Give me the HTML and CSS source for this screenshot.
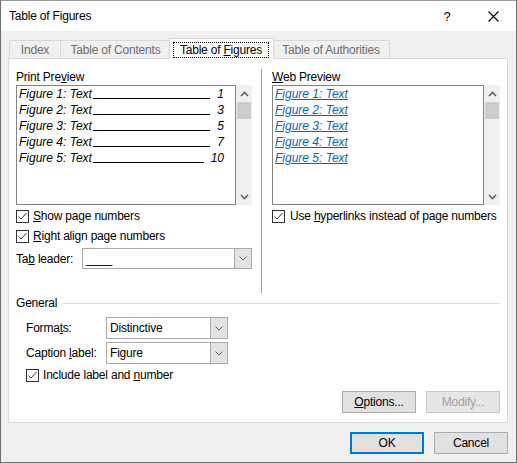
FILE: index.html
```html
<!DOCTYPE html>
<html>
<head>
<meta charset="utf-8">
<link rel="stylesheet" href="styles.css">
</head>
<body>
<div class="window">
  <div class="titlebar">
    <span class="title">Table of Figures</span>
    <span class="tbtn help">?</span>
    <span class="tbtn close"><svg width="11" height="11" viewBox="0 0 11 11"><path d="M0.5 0.5 L10.5 10.5 M10.5 0.5 L0.5 10.5" stroke="#000" stroke-width="1.1" fill="none"/></svg></span>
  </div>
  <div class="content">
    <div class="tabs">
      <div class="tab t-index">Index</div>
      <div class="tab t-toc">Table of Contents</div>
      <div class="tab t-tof active"><span class="focus">Table of <u>F</u>igures</span></div>
      <div class="tab t-toa">Table of Authorities</div>
    </div>
    <div class="panel">
      <div class="top-row">
        <div class="col col-left">
          <div class="label">Print Pre<u>v</u>iew</div>
          <div class="listwrap">
            <div class="listbox print">
              <div class="entry"><span class="cap">Figure 1: Text</span><span class="leader"></span><span class="num">1</span></div>
              <div class="entry"><span class="cap">Figure 2: Text</span><span class="leader"></span><span class="num">3</span></div>
              <div class="entry"><span class="cap">Figure 3: Text</span><span class="leader"></span><span class="num">5</span></div>
              <div class="entry"><span class="cap">Figure 4: Text</span><span class="leader"></span><span class="num">7</span></div>
              <div class="entry"><span class="cap">Figure 5: Text</span><span class="leader"></span><span class="num">10</span></div>
            </div>
            <div class="scrollbar">
              <div class="sarrow"><svg width="9" height="6" viewBox="0 0 9 6"><path d="M1 5 L4.5 1.5 L8 5" stroke="#606060" stroke-width="1.6" fill="none"/></svg></div>
              <div class="thumb"></div>
              <div class="strack"></div>
              <div class="sarrow"><svg width="9" height="6" viewBox="0 0 9 6"><path d="M1 1 L4.5 4.5 L8 1" stroke="#606060" stroke-width="1.6" fill="none"/></svg></div>
            </div>
          </div>
          <div class="check c1">
            <svg class="box" width="13" height="13" viewBox="0 0 13 13"><rect x="0.5" y="0.5" width="12" height="12" fill="#fff" stroke="#333"/><path d="M2.5 6.5 L5 9 L10.5 3" stroke="#333" stroke-width="1" fill="none"/></svg>
            <span><u>S</u>how page numbers</span>
          </div>
          <div class="check c2">
            <svg class="box" width="13" height="13" viewBox="0 0 13 13"><rect x="0.5" y="0.5" width="12" height="12" fill="#fff" stroke="#333"/><path d="M2.5 6.5 L5 9 L10.5 3" stroke="#333" stroke-width="1" fill="none"/></svg>
            <span><u>R</u>ight align page numbers</span>
          </div>
          <div class="field">
            <span class="flabel tl">Ta<u>b</u> leader:</span>
            <div class="combo wide">
              <span class="ctext">____</span>
              <span class="cbtn"><svg width="8" height="5" viewBox="0 0 8 5"><path d="M0.5 0.5 L4 4 L7.5 0.5" stroke="#606060" fill="none"/></svg></span>
            </div>
          </div>
        </div>
        <div class="divider"></div>
        <div class="col col-right">
          <div class="label"><u>W</u>eb Preview</div>
          <div class="listwrap">
            <div class="listbox web">
              <div class="entry"><span class="link">Figure 1: Text</span></div>
              <div class="entry"><span class="link">Figure 2: Text</span></div>
              <div class="entry"><span class="link">Figure 3: Text</span></div>
              <div class="entry"><span class="link">Figure 4: Text</span></div>
              <div class="entry"><span class="link">Figure 5: Text</span></div>
            </div>
            <div class="scrollbar">
              <div class="sarrow"><svg width="9" height="6" viewBox="0 0 9 6"><path d="M1 5 L4.5 1.5 L8 5" stroke="#606060" stroke-width="1.6" fill="none"/></svg></div>
              <div class="thumb"></div>
              <div class="strack"></div>
              <div class="sarrow"><svg width="9" height="6" viewBox="0 0 9 6"><path d="M1 1 L4.5 4.5 L8 1" stroke="#606060" stroke-width="1.6" fill="none"/></svg></div>
            </div>
          </div>
          <div class="check c1 cr">
            <svg class="box" width="13" height="13" viewBox="0 0 13 13"><rect x="0.5" y="0.5" width="12" height="12" fill="#fff" stroke="#333"/><path d="M2.5 6.5 L5 9 L10.5 3" stroke="#333" stroke-width="1" fill="none"/></svg>
            <span>Use <u>h</u>yperlinks instead of page numbers</span>
          </div>
        </div>
      </div>
      <div class="general-head"><span>General</span><span class="rule"></span></div>
      <div class="grow g1">
        <span class="flabel gl">Forma<u>t</u>s:</span>
        <div class="combo narrow">
          <span class="ctext">Distinctive</span>
          <span class="cbtn"><svg width="8" height="5" viewBox="0 0 8 5"><path d="M0.5 0.5 L4 4 L7.5 0.5" stroke="#606060" fill="none"/></svg></span>
        </div>
      </div>
      <div class="grow g2">
        <span class="flabel gl">Caption <u>l</u>abel:</span>
        <div class="combo narrow">
          <span class="ctext">Figure</span>
          <span class="cbtn"><svg width="8" height="5" viewBox="0 0 8 5"><path d="M0.5 0.5 L4 4 L7.5 0.5" stroke="#606060" fill="none"/></svg></span>
        </div>
      </div>
      <div class="check gc">
        <svg class="box" width="13" height="13" viewBox="0 0 13 13"><rect x="0.5" y="0.5" width="12" height="12" fill="#fff" stroke="#333"/><path d="M2.5 6.5 L5 9 L10.5 3" stroke="#333" stroke-width="1" fill="none"/></svg>
        <span>Include label and <u>n</u>umber</span>
      </div>
      <div class="btnrow">
        <button class="btn"><u>O</u>ptions...</button>
        <button class="btn disabled">Modify...</button>
      </div>
    </div>
    <div class="footer">
      <button class="btn default">OK</button>
      <button class="btn">Cancel</button>
    </div>
  </div>
</div>
</body>
</html>
```
FILE: styles.css
```css
html, body {
  margin: 0;
  padding: 0;
}
body {
  font-family: "Liberation Sans", Arial, sans-serif;
  font-size: 12px;
  letter-spacing: -0.2px;
  color: #000;
  background: #fff;
}
u {
  text-decoration: underline;
  text-underline-offset: 1px;
}
.window {
  width: 517px;
  height: 463px;
  box-sizing: border-box;
  border: 1px solid #707070;
  border-top-color: #9a9a9a;
  display: flex;
  flex-direction: column;
  background: #f0f0f0;
}
.titlebar {
  height: 30px;
  flex: none;
  background: #fff;
  display: flex;
  align-items: center;
  padding-left: 8px;
}
.title {
  flex: 1;
  font-size: 12px;
}
.tbtn {
  width: 46px;
  height: 30px;
  display: flex;
  align-items: center;
  justify-content: center;
}
.help {
  font-size: 13px;
}
.content {
  flex: 1;
  padding: 7px 8px 8px 7px;
  display: flex;
  flex-direction: column;
}
.tabs {
  display: flex;
  height: 20px;
  padding-left: 1px;
  flex: none;
}
.tab {
  box-sizing: border-box;
  flex: none;
  height: 18px;
  margin-top: 2px;
  border: 1px solid #d9d9d9;
  border-bottom: none;
  background: #f0f0f0;
  color: #6d6d6d;
  text-align: center;
  line-height: 17px;
  padding-top: 1px;
  white-space: nowrap;
}
.t-index { width: 52px; }
.t-toc { width: 111px; margin-left: -1px; }
.t-tof { width: 105px; margin-left: -2px; }
.t-toa { width: 118px; margin-left: -2px; }
.tab.active {
  height: 21px;
  margin-top: 0;
  background: #fff;
  color: #000;
  position: relative;
  z-index: 1;
  padding: 3px 0 0 3px;
  text-align: left;
}
.focus {
  display: block;
  box-sizing: border-box;
  width: 96px;
  height: 16px;
  border: 1px dotted #000;
  text-align: center;
  line-height: 14px;
  white-space: nowrap;
}
.panel {
  box-sizing: border-box;
  height: 365px;
  flex: none;
  border: 1px solid #d9d9d9;
  background: #fff;
  padding: 10px 7px 0 7px;
}
.top-row {
  display: flex;
  height: 224px;
}
.col { flex: none; min-width: 0; }
.col-left { width: 236px; }
.col-right { width: 228px; }
.divider {
  flex: none;
  width: 1px;
  background: #a0a0a0;
  margin: 0 10px 0 9px;
}
.label {
  height: 16px;
  line-height: 16px;
  white-space: nowrap;
}
.listwrap {
  display: flex;
  height: 120px;
}
.listbox {
  box-sizing: border-box;
  flex: 1 1 0;
  min-width: 0;
  overflow: hidden;
  border: 1px solid #828282;
  padding: 0 11px 0 2px;
  font-style: italic;
  letter-spacing: 0;
}
.entry {
  display: flex;
  height: 16px;
  line-height: 16px;
  white-space: nowrap;
}
.cap { flex: none; }
.leader {
  flex: 1 1 0;
  min-width: 0;
  align-self: flex-start;
  box-sizing: border-box;
  height: 13px;
  border-bottom: 1px solid #000;
  margin-left: 1px;
}
.num {
  flex: none;
  margin-left: 7px;
}
.link {
  color: #0563c1;
  text-decoration: underline;
}
.scrollbar {
  flex: none;
  width: 16px;
  background: #f0f0f0;
  display: flex;
  flex-direction: column;
}
.sarrow {
  height: 17px;
  display: flex;
  align-items: center;
  justify-content: center;
}
.thumb {
  height: 17px;
  margin: 0 1px 0 1px;
  background: #cdcdcd;
}
.strack { flex: 1; }
.check {
  display: flex;
  align-items: center;
  height: 16px;
  gap: 4px;
  margin-top: 3px;
  white-space: nowrap;
}
.check.c2 { margin-top: 4px; }
.check.cr { gap: 5px; }
.box { flex: none; display: block; }
.field {
  display: flex;
  align-items: center;
  margin-top: 4px;
}
.flabel { flex: none; white-space: nowrap; }
.tl { width: 66px; }
.gl { width: 80px; }
.combo {
  box-sizing: border-box;
  flex: none;
  border: 1px solid #a9a9a9;
  display: flex;
  background: #fff;
}
.combo.wide { width: 170px; height: 21px; }
.combo.narrow { width: 122px; height: 22px; }
.ctext {
  flex: 1;
  padding-left: 3px;
  display: flex;
  align-items: center;
}
.cbtn {
  width: 16px;
  background: #e3e3e3;
  border-left: 1px solid #a9a9a9;
  display: flex;
  align-items: center;
  justify-content: center;
}
.general-head {
  display: flex;
  align-items: center;
  height: 16px;
  margin-top: 2px;
}
.rule {
  flex: 1;
  height: 1px;
  background: #dcdcdc;
  margin-left: 6px;
}
.grow {
  display: flex;
  align-items: center;
  margin-left: 10px;
}
.g1 { margin-top: 6px; }
.g2 { margin-top: 3px; }
.gc { margin-left: 10px; margin-top: 3px; }
.btnrow {
  display: flex;
  justify-content: flex-end;
  gap: 10px;
  margin-top: 8px;
}
.btn {
  box-sizing: border-box;
  width: 74px;
  height: 22px;
  border: 1px solid #adadad;
  background: #e1e1e1;
  font-family: inherit;
  font-size: 12px;
  letter-spacing: -0.2px;
  color: #000;
  padding: 0;
  margin: 0;
}
.btn.disabled {
  color: #a0a0a0;
  border-color: #c6c6c6;
  background: #e6e6e6;
}
.btn.default {
  border: 2px solid #0078d7;
}
.footer {
  display: flex;
  justify-content: flex-end;
  gap: 10px;
  margin-top: 9px;
}
```
